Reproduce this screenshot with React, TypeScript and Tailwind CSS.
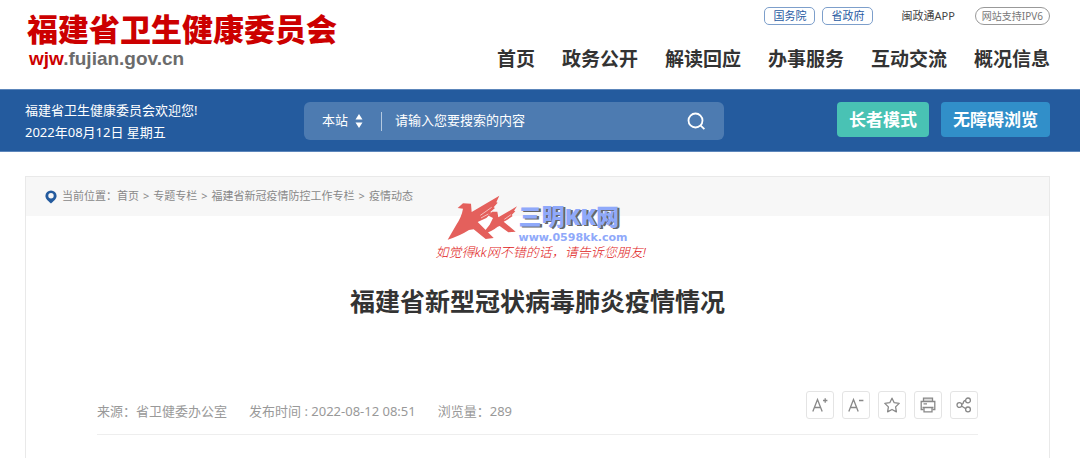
import React, { useState } from 'react';

const navLinks = ['首页', '政务公开', '解读回应', '办事服务', '互动交流', '概况信息'];

const breadcrumbs = ['首页', '专题专栏', '福建省新冠疫情防控工作专栏', '疫情动态'];

const Header: React.FC = () => {
  return (
    <header className="flex items-start justify-between h-[89px] pl-[27px] pr-[30px]">
      {/* Site logo */}
      <a href="#" className="block pt-[10px] whitespace-nowrap">
        <span className="block text-[31px] leading-[38px] font-black text-[#cc0000]">福建省卫生健康委员会</span>
        <span className="block pl-[2px] font-['Liberation_Sans',sans-serif] text-[19px] leading-[22px] font-bold text-[#6b6b6b]">
          <span className="text-[#cc0000]">wjw</span>.fujian.gov.cn
        </span>
      </a>

      <div className="flex flex-col items-end">
        <div className="flex items-center pt-[7px] text-[11px] leading-[16px] whitespace-nowrap">
          <a href="#" className="px-2 rounded-[5px] border border-[#7d9fcb] text-[#2a5ca3]">国务院</a>
          <a href="#" className="ml-[7px] px-2 rounded-[5px] border border-[#7d9fcb] text-[#2a5ca3]">省政府</a>
          <a href="#" className="ml-7 text-[#444]">闽政通APP</a>
          <a href="#" className="ml-5 px-1.5 rounded-full border border-[#999] text-[10px] text-[#777]">网站支持IPV6</a>
        </div>

        <nav className="flex gap-[27px] mt-5 text-[19px] leading-[28px] font-bold text-[#333] whitespace-nowrap">
          {navLinks.map((link) => (
            <a key={link} href="#">{link}</a>
          ))}
        </nav>
      </div>
    </header>
  );
};

const SearchBar: React.FC = () => {
  const [keyword, setKeyword] = useState('');

  return (
    <div className="bg-[#245b9e] border-y border-[#5c86bb]">
      <div className="flex items-start h-[61px] pl-[25px] pr-[30px] pt-3 text-[13px] text-white">
        <div className="w-[279px] shrink-0 -mt-[3px] leading-[22px]">
          <p>福建省卫生健康委员会欢迎您!</p>
          <p>2022年08月12日 星期五</p>
        </div>

        <form className="flex flex-1 items-center max-w-[420px] h-[38px] rounded-md bg-[#4d7bb1]" onSubmit={(e) => e.preventDefault()}>
          <div className="flex items-center gap-1.5 pl-[18px]">
            <select aria-label="搜索范围" className="appearance-none bg-transparent outline-none">
              <option>本站</option>
            </select>
            <svg className="w-2 h-[14px] pointer-events-none" viewBox="0 0 8 14" fill="currentColor">
              <path d="M4 0L7.5 5.6H0.5zM4 14L0.5 8.4H7.5z" />
            </svg>
          </div>
          <span className="w-px h-[19px] ml-[18px] bg-[#b4c9e0]" />
          <input
            type="text"
            aria-label="搜索"
            placeholder="请输入您要搜索的内容"
            value={keyword}
            onChange={(e) => setKeyword(e.target.value)}
            className="flex-1 min-w-0 px-[13px] bg-transparent outline-none placeholder:text-white"
          />
          <button type="submit" aria-label="搜索" className="mr-[18px]">
            <svg className="w-[19px] h-[19px]" viewBox="0 0 19 19" fill="none" stroke="currentColor" strokeWidth="1.8">
              <circle cx="8.5" cy="8.5" r="7" />
              <path d="M13.2 13.2L17.4 17.2" />
            </svg>
          </button>
        </form>

        <div className="flex gap-3 ml-auto pl-4 text-[17px] leading-[35px] font-bold whitespace-nowrap">
          <button type="button" className="px-3 rounded-[4px] bg-[#49c2b4]">长者模式</button>
          <button type="button" className="px-3 rounded-[4px] bg-[#318fc9]">无障碍浏览</button>
        </div>
      </div>
    </div>
  );
};

const Watermark: React.FC = () => {
  return (
    <div className="absolute left-1/2 top-[13px] w-[220px] -translate-x-1/2 pl-2 whitespace-nowrap pointer-events-none">
      <div className="flex">
        <svg className="shrink-0 w-20 h-[55px] ml-[7px]" viewBox="0 0 240 165" fill="#e4605c">
          <path d="M44 54L60 40L84 41L86 66L169 17L160 37L164 38L152 52L156 54L142 66L145 69L130 84L104 96L152 144L128 147L92 118L78 120Q50 138 14 149L40 104Q56 80 60 56Z" />
          <path d="M137 77L147 65L163 65L166 82L222 49L213 62L217 64L206 75L209 78L192 90L182 95L218 125L196 127L170 108L164 110Q145 126 118 132L140 104L150 84Z" />
          <path d="M112 76L146 52M114 84L136 72M184 88L204 74" fill="none" stroke="#fbeeee" strokeWidth="2" />
        </svg>
        <div className="-ml-[4px] pt-3">
          <p className="text-[23px] leading-[28px] font-black text-[#8fa9fa] [text-shadow:2px_1px_0_#666]">三明KK网</p>
          <p className="font-['DejaVu_Sans',sans-serif] text-[11px] leading-[16px] font-bold text-[#8fa9fa]">www.0598kk.com</p>
        </div>
      </div>
      <p className="text-[13px] leading-3 italic font-light text-[#e02020]">如觉得kk网不错的话，请告诉您朋友!</p>
    </div>
  );
};

const toolButton = 'flex items-center justify-center w-7 h-7 rounded-[3px] border border-[#e4e4e4] text-[#888]';

const Tools: React.FC = () => {
  return (
    <div className="flex gap-2">
      <button type="button" aria-label="放大字体" className={toolButton}>
        <svg className="w-4 h-4" viewBox="0 0 16 16" fill="none" stroke="currentColor" strokeWidth="1.3">
          <path d="M0.8 14.5L5.5 2.5L10.2 14.5M2.6 10.5H8.4M11 3.5H15.4M13.2 1.3V5.7" />
        </svg>
      </button>
      <button type="button" aria-label="缩小字体" className={toolButton}>
        <svg className="w-4 h-4" viewBox="0 0 16 16" fill="none" stroke="currentColor" strokeWidth="1.3">
          <path d="M0.8 14.5L5.5 2.5L10.2 14.5M2.6 10.5H8.4M11 3.5H15.4" />
        </svg>
      </button>
      <button type="button" aria-label="收藏" className={toolButton}>
        <svg className="w-4 h-4" viewBox="0 0 16 16" fill="none" stroke="currentColor" strokeWidth="1.3" strokeLinejoin="round">
          <path d="M8 1.2L10.2 5.7L15.2 6.4L11.6 9.9L12.4 14.8L8 12.5L3.6 14.8L4.4 9.9L0.8 6.4L5.8 5.7Z" />
        </svg>
      </button>
      <button type="button" aria-label="打印" className={toolButton}>
        <svg className="w-4 h-4" viewBox="0 0 16 16" fill="none" stroke="currentColor" strokeWidth="1.3">
          <path d="M3.5 4V1.2H12.5V4" fill="#ddd" />
          <path d="M3.5 12.5H1.2V4.5H14.8V12.5H12.5M3.5 6.8H7" />
          <path d="M2.5 10.5H13.5M4 10.5V14.8H12V10.5" />
        </svg>
      </button>
      <button type="button" aria-label="分享" className={toolButton}>
        <svg className="w-4 h-4" viewBox="0 0 16 16" fill="none" stroke="currentColor" strokeWidth="1.3">
          <circle cx="3.4" cy="8" r="2.4" />
          <circle cx="12" cy="3.4" r="2.4" />
          <circle cx="12" cy="12.4" r="2.4" />
          <path d="M5.6 7.4L7 6.6Q7.4 3.6 9.7 3.4M5.5 9L9.8 11.8" />
        </svg>
      </button>
    </div>
  );
};

const App: React.FC = () => {
  return (
    <div className="min-h-screen overflow-hidden flex flex-col bg-white font-['Noto_Sans','Noto_Sans_CJK_SC',sans-serif]">
      <Header />
      <SearchBar />

      <main className="relative flex flex-col flex-1 mt-6 ml-[25px] mr-[30px] border border-b-0 border-[#e9e9e9]">
        {/* Breadcrumb */}
        <nav className="flex items-center h-[39px] pl-[19px] bg-[#f7f7f7] text-[11px] text-[#888] whitespace-nowrap">
          <svg className="w-3 h-[14px] mr-[5px]" viewBox="0 0 12 14">
            <path fillRule="evenodd" fill="#245b9e" d="M6 0.5A5.6 5.6 0 0 0 0.4 6C0.4 9 4 11.5 6 13.6C8 11.5 11.6 9 11.6 6A5.6 5.6 0 0 0 6 0.5ZM6 3A2.7 2.7 0 1 1 6 8.4A2.7 2.7 0 0 1 6 3Z" />
          </svg>
          <span>当前位置：</span>
          {breadcrumbs.map((item, index) => (
            <React.Fragment key={item}>
              {index > 0 && <span className="mx-1">&gt;</span>}
              <a href="#">{item}</a>
            </React.Fragment>
          ))}
        </nav>

        <Watermark />

        <article className="px-[71px] pt-[66px]">
          <h1 className="text-center text-[25px] leading-[38px] font-bold text-[#333]">福建省新型冠状病毒肺炎疫情情况</h1>

          <div className="flex items-end justify-between mt-[71px] pb-[15px] border-b border-[#eee]">
            <div className="flex gap-[22px] pb-px text-[13px] leading-[14px] text-[#999]">
              <span>来源：省卫健委办公室</span>
              <span>发布时间 : 2022-08-12 08:51</span>
              <span>浏览量：289</span>
            </div>
            <Tools />
          </div>
        </article>
      </main>
    </div>
  );
};

export default App;
